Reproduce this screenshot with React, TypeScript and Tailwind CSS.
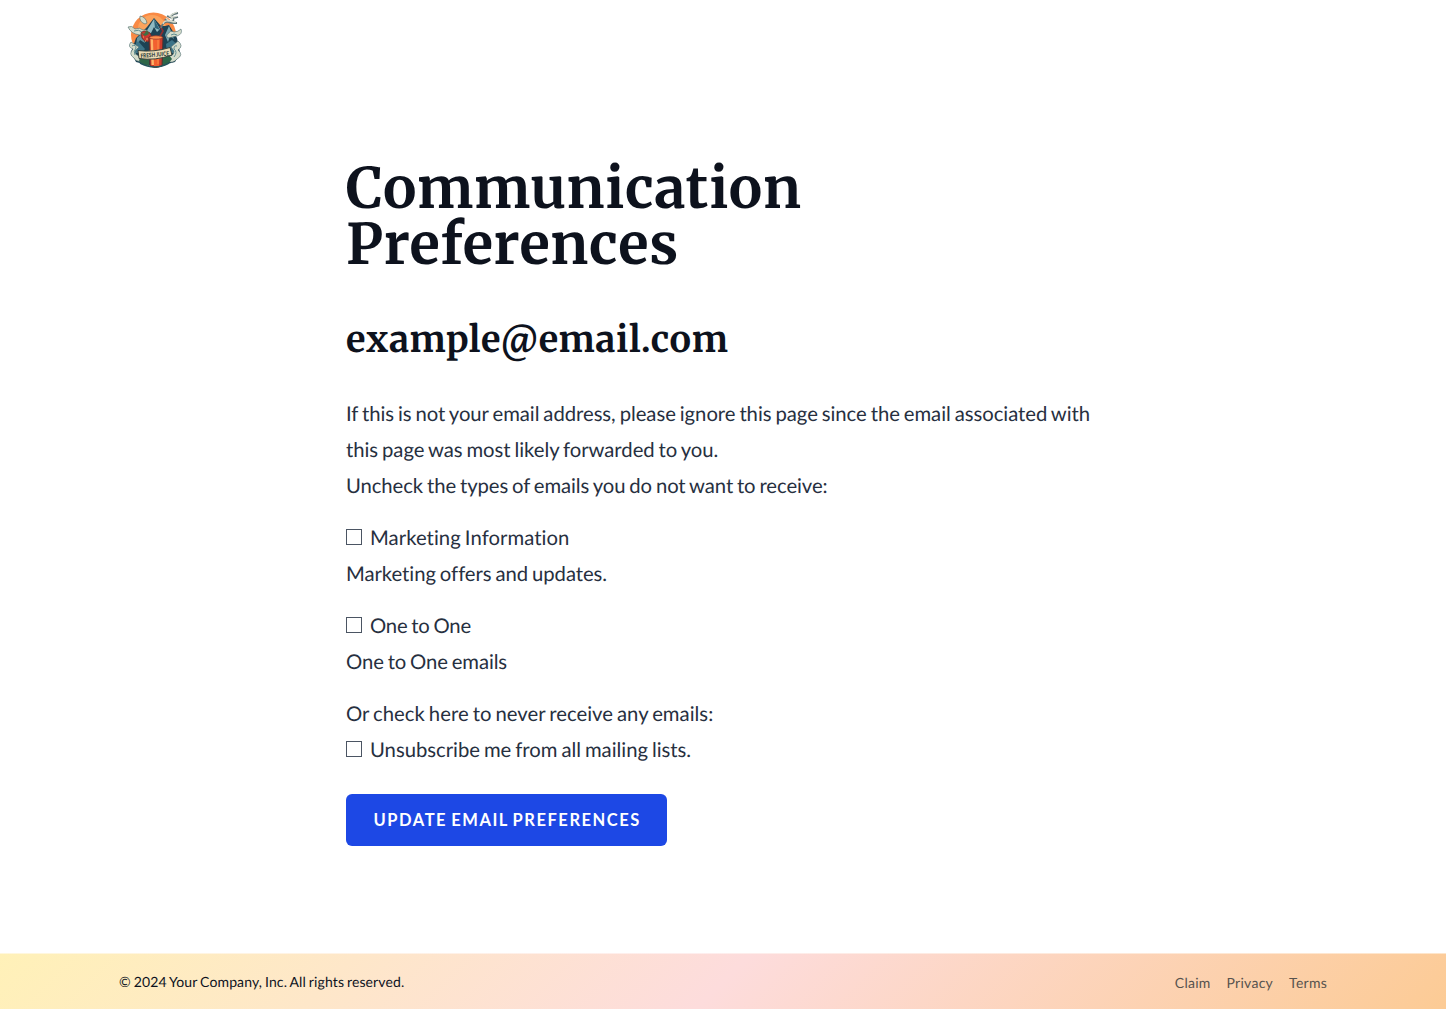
import React from "react";

function Logo() {
  return (
    <svg viewBox="0 0 70 70" className="block h-[70px] w-[70px]" role="img" aria-label="Fresh Juice">
      <circle cx="33.5" cy="31" r="22.5" fill="#f98a45" />
      <circle cx="32" cy="25" r="14" fill="#fba35c" />
      <path d="M11 48 L16 34 L22 28 L27 23 L34 14 L41 22 L45 22 L49 21 L57 34 L60 49 L55 58 L35 63 L16 58Z" fill="#1c4254" />
      <path d="M34 15 L40 25 L37 28 L34 23 L31 29 L26 28Z" fill="#8fbac2" />
      <path d="M34 15 L35 24 L40 26Z" fill="#2f657a" />
      <path d="M49 22 L54 35 L50 32 L48 38 L45 31Z" fill="#7ba9b2" />
      <path d="M17 34 L22 29 L25 39 L20 36 L16 43Z" fill="#65939d" />
      <path d="M13 44 L18 37 L25 45 L22 49 L13 49Z M46 40 L52 36 L59 42 L57 49 L47 49Z" fill="#3c7488" />
      <g fill="#d5dccb" stroke="#4a6a6c" strokeWidth=".6">
        <path d="M20 12 Q26 13 27 19 L25 20 Q19 18 20 12Z" />
        <path d="M8 23 Q12 21 15 25 Q20 23 23 26 Q28 25 28 29 L20 31 Q11 30 8 23Z" />
        <path d="M61 25 Q63 30 57 32 L48 34 Q45 31 49 29 Q50 26 54 28 Q58 28 61 25Z" />
        <path d="M11 38 Q7 43 13 45 Q8 50 14 54 Q16 58 21 57 L21 52 Q15 52 15 47 L19 43Z" />
        <path d="M58 37 Q64 42 58 46 Q64 51 57 55 Q53 60 48 57 L49 52 Q54 52 54 47 L51 43Z" />
      </g>
      <path d="M12 42q4-2 4 2q-3 3-1 7 M57 42q-3-1-3 3q4 3 0 8 M14 27q5-2 8 1 M51 31q3-2 6 0" fill="none" stroke="#5f8e91" />
      <path d="M19 56 L23 51 L29 54 L29 62 L21 60Z M43 53 L49 51 L52 55 L48 60 L41 62Z" fill="#2e6648" />
      <path d="M21 29 Q24 25 30 29 Q33 33 28 38 Q21 37 21 29Z" fill="#c93730" stroke="#6c2c2a" strokeWidth=".8" />
      <path d="M20 28 L24 30 L27 26 L29 30 L25 32Z" fill="#3f6f43" />
      <path d="M23 33h1M26 35h2M25 37h1" stroke="#f3b56b" />
      <path d="M40 22 L43 27 L39 34" fill="none" stroke="#8d2f30" strokeWidth="1.7" />
      <path d="M41 24 Q43 17 49 18 Q55 18 53 14 Q48 11 58 9 M45 15 Q48 20 57 19 M47 12 Q52 15 58 13" fill="none" stroke="#62777a" strokeWidth="1.8" />
      <path d="M43 20Q44 16 49 17Q55 16 51 13Q49 11 57 8M46 14 Q49 18 56 18 M49 12Q53 14 57 12" fill="none" stroke="#d5dacd" strokeWidth="1.3" />
      <path d="M29 33 Q35 31 43 33 L42 62 Q35 65 30 62Z" fill="#cc3b2c" stroke="#55302d" strokeWidth="1" />
      <path d="M33 35 L40 35 L39 62 L34 62Z" fill="#f3602f" />
      <path d="M30.5 35 L33 35 L34 61 L31.5 61Z" fill="#ffb467" />
      <path d="M38 36v24" stroke="#fb8542" strokeWidth="1.3" />
      <ellipse cx="36" cy="33.5" rx="6.5" ry="1.7" fill="#ff8f4d" stroke="#9c3c30" strokeWidth=".8" />
      <path d="M20 59 Q35 67 49 59" fill="none" stroke="#24545b" strokeWidth="1.6" />
      <path d="M18 46.5 Q34 48.5 50 43.5 L52 51 Q35 57 19 54.5Z" fill="#eddcb5" stroke="#38423e" strokeWidth="1" />
      <text x="20.5" y="52.8" textLength="28.5" lengthAdjust="spacingAndGlyphs" transform="rotate(-5 35 51)" fill="#273a3b" fontFamily="Lato, sans-serif" fontSize="6" fontWeight="900">FRESH JUICE</text>
    </svg>
  );
}

function Option({ label, className }: { label: string; className: string }) {
  return (
    <label className="flex h-9 items-center">
      <input type="checkbox" className="relative -top-px mr-2 size-4 shrink-0 appearance-none border border-[#4b5563] bg-white checked:bg-[#1c48e5]" />
      <span className={className}>{label}</span>
    </label>
  );
}

export default function App() {
  return (
    <div className="flex h-[1009px] flex-col bg-white font-['Lato',sans-serif] text-[#0d121d] [text-rendering:geometricPrecision]">
      <header className="h-20 shrink-0 pt-1 pl-[120px]">
        <Logo />
      </header>
      <main className="w-[1110px] grow pt-[81px] pl-[346px]">
        <h1 className="w-[480px] text-[56px] leading-[56px] font-bold tracking-[0.75px] font-['Merriweather',serif]">
          Communication Preferences
        </h1>
        <h2 className="mt-11 h-[45px] text-[36px] leading-[45px] font-bold tracking-[0.6px] font-['Merriweather',serif]">example@email.com</h2>
        <form className="mt-[34px] text-[20.3px] leading-9 text-[#27303f] [word-spacing:-1.2px]">
          <p className="tracking-[-0.04px]">If this is not your email address, please ignore this page since the email associated with this page was most likely forwarded to you.</p>
          <p className="tracking-[-0.08px]">Uncheck the types of emails you do not want to receive:</p>
          <div className="mt-4">
            <Option label="Marketing Information" className="tracking-[0.05px]" />
            <p className="tracking-[-0.05px]">Marketing offers and updates.</p>
          </div>
          <div className="mt-4">
            <Option label="One to One" className="tracking-[-0.18px]" />
            <p className="tracking-[-0.1px]">One to One emails</p>
          </div>
          <div className="mt-4">
            <p className="tracking-[0.02px]">Or check here to never receive any emails:</p>
            <Option label="Unsubscribe me from all mailing lists." className="tracking-[-0.02px]" />
          </div>
          <button type="button" className="mt-[26px] flex h-[52px] w-[320.5px] items-center justify-center rounded-md bg-[#1d48e5] pl-0.5 text-[16.5px] font-bold tracking-[1.55px] [word-spacing:-1.5px] whitespace-nowrap text-white">UPDATE EMAIL PREFERENCES</button>
        </form>
      </main>
      <footer className="flex h-14 shrink-0 items-center justify-between border-t border-white/50 bg-[linear-gradient(135deg,#fff1b8_0%,#fddcdc_50%,#fccb95_100%)] px-[119px] text-[14px]">
        <p className="pb-px tracking-[0.12px] [word-spacing:-0.8px]">© 2024 Your Company, Inc. All rights reserved.</p>
        <nav className="flex gap-4 pt-px tracking-[0.26px] text-[#57534e]">
          <a href="#claim">Claim</a>
          <a href="#privacy">Privacy</a>
          <a href="#terms">Terms</a>
        </nav>
      </footer>
    </div>
  );
}
